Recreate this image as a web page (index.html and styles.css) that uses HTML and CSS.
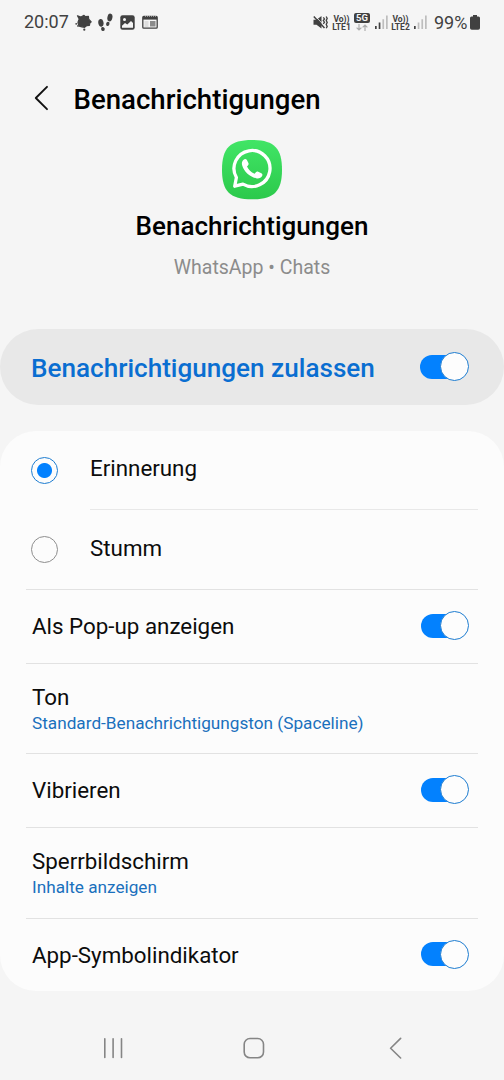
FILE: index.html
```html
<!DOCTYPE html>
<html lang="de">
<head>
<meta charset="utf-8">
<title>Benachrichtigungen</title>
<link rel="stylesheet" href="styles.css">
</head>
<body>
<div class="screen">
  <div class="status">
    <span class="clock">20:07</span>
    <svg class="ic-leaf" width="17" height="17" viewBox="0 0 17 17" fill="#414141"><path d="M2.500 1.800 6 3 9 1.300l1.400 1.400 3-.4.300 2.900 2.500 2.600-1.500 1.500-.2 2-3 .4-1.900 1.600-2.700-.5-2.600-.6-1-2.100L3 8.300 4.200 5z" stroke="#414141" stroke-width="1.200" stroke-linejoin="round"/><circle cx="1.200" cy="9.800" r=".9"/><circle cx="3" cy="11.900" r=".9"/><circle cx="9.300" cy="15.700" r="1.100"/></svg>
    <svg class="ic-steps" width="15" height="19" viewBox="0 0 15 19" fill="#414141"><ellipse cx="2.900" cy="9.800" rx="2.600" ry="3.900" transform="rotate(-10 2.900 9.800)"/><ellipse cx="4.900" cy="16" rx="1.800" ry="2.100" transform="rotate(-15 4.900 16)"/><ellipse cx="11.900" cy="4.500" rx="2.500" ry="3.900" transform="rotate(12 11.900 4.500)"/><ellipse cx="9.800" cy="10.900" rx="1.700" ry="2.100" transform="rotate(15 9.800 10.900)"/></svg>
    <svg class="ic-photo" width="15" height="15" viewBox="0 0 15 15"><rect x=".3" y=".3" width="14.400" height="14.400" rx="2.300" fill="#414141"/><circle cx="4.500" cy="4.500" r="1.500" fill="#f5f5f5"/><path d="M2 10.800 5 8l2.300 1.600L11 6l2 2v4.800H2z" fill="#f5f5f5"/></svg>
    <svg class="ic-news" width="16" height="14" viewBox="0 0 16 14"><rect x=".8" y="1.500" width="14.400" height="11.700" rx="1" fill="none" stroke="#414141" stroke-width="1.300"/><path d="M1 1v3.600h14V1" fill="#414141"/><path d="M3 1.200h11" stroke="#f5f5f5" stroke-width=".7" stroke-dasharray="1 1"/><path d="M2.500 7h4M2.500 9h4M2.500 11h4" stroke="#bbb" stroke-width=".8"/><rect x="8" y="6" width="5.500" height="5.500" fill="#8a8a8a"/></svg>
    <span class="grow"></span>
    <svg class="ic-mute" width="15" height="15" viewBox="0 0 15 15"><path d="M.5 4.800h3L8.500 1v12.500l-5-3.700h-3z" fill="#414141"/><path d="M2 .8 12 11.500" stroke="#f5f5f5" stroke-width=".8"/><path d="M.8 1.400 11.500 13" stroke="#414141" stroke-width="1.500"/><path d="M10.300 2.300l1.200 1.700-1.200 1.600 1.200 1.600-1.200 1.600M13.200 1.500l1 1.900-1 2 1 2-1 2 1 2-1 1.800" fill="none" stroke="#414141" stroke-width="1.300"/></svg>
    <span class="volte v1"><span>Vo))</span><span>LTE1</span></span>
    <span class="net"><span class="g5">5G</span>
      <svg width="12" height="7" viewBox="0 0 12 7" fill="none" stroke="#adadad" stroke-width="1.200"><path d="M3 0v6M.6 3.600 3 6l2.400-2.400M9 7V1M6.600 3.400 9 1l2.400 2.400"/></svg></span>
    <svg class="sig s1" width="13" height="14" viewBox="0 0 13 14"><path d="M0 11h1.700v3H0zM3.700 7.500h1.700V14H3.700z" fill="#414141"/><path d="M7.400 4.300h1.700V14H7.400zM11 .5h1.700V14H11z" fill="#bdbdbd"/></svg>
    <span class="volte v2"><span>Vo))</span><span>LTE2</span></span>
    <svg class="sig s2" width="13" height="14" viewBox="0 0 13 14"><path d="M0 11h1.700v3H0z" fill="#414141"/><path d="M3.700 7.500h1.700V14H3.700zM7.400 4.300h1.700V14H7.400zM11 .5h1.700V14H11z" fill="#bdbdbd"/></svg>
    <span class="pct">99%</span>
    <svg class="ic-bat" width="10" height="15" viewBox="0 0 10 15"><path d="M3 0h4v1.600h1.500A1.500 1.500 0 0 1 10 3.100v9.900a1.800 1.800 0 0 1-1.800 1.800H1.800A1.800 1.800 0 0 1 0 13V3.100a1.500 1.500 0 0 1 1.500-1.500H3z" fill="#414141"/></svg>
  </div>

  <header class="bar">
    <svg class="back" width="15" height="26" viewBox="0 0 15 26"><path d="M13 1.800 1.800 13 13 24.200" fill="none" stroke="#111" stroke-width="1.900" stroke-linecap="round" stroke-linejoin="round"/></svg>
    <h1>Benachrichtigungen</h1>
  </header>

  <section class="app">
    <svg class="logo" width="60" height="60" viewBox="0 0 60 60">
      <defs><linearGradient id="green" x1="0" y1="0" x2="0" y2="1"><stop offset="0" stop-color="#41e566"/><stop offset="1" stop-color="#2cc94b"/></linearGradient></defs>
      <path d="M30 0C52 0 60 8 60 29.700S52 59.300 30 59.300 0 51.400 0 29.700 8 0 30 0z" fill="url(#green)"/>
      <path d="M14.400 37.500A18 18 0 1 1 21 44.100L12.700 46.200z" fill="none" stroke="#fff" stroke-width="3.300" stroke-linejoin="round"/>
      <path d="M21.600 19.700c1-.9 2.600-.8 3.300.3l1.500 3.100c.4.900.2 1.700-.5 2.400l-.9 1c1.500 3.300 4 5.700 7.600 7.200l1.300-1.500c.6-.7 1.400-.9 2.300-.5l3.200 1.500c1 .5 1.300 1.400.8 2.500-1.100 2.200-3.500 3.100-6.100 2.500-6.900-1.700-12-6.500-13.900-12.700-.7-2.300-.3-4.400 1.400-5.800z" fill="#fff"/>
    </svg>
    <h2>Benachrichtigungen</h2>
    <p>WhatsApp • Chats</p>
  </section>

  <div class="master"><span>Benachrichtigungen zulassen</span><i class="switch wide"></i></div>

  <div class="list">
    <div class="row radio first"><i class="dot on"></i><span class="t">Erinnerung</span></div>
    <div class="row radio"><i class="dot"></i><span class="t">Stumm</span></div>
    <div class="row popup"><span class="t">Als Pop-up anzeigen</span><i class="switch"></i></div>
    <div class="row two"><span class="t">Ton</span><span class="s">Standard-Benachrichtigungston (Spaceline)</span></div>
    <div class="row vib"><span class="t">Vibrieren</span><i class="switch"></i></div>
    <div class="row two lock"><span class="t">Sperrbildschirm</span><span class="s">Inhalte anzeigen</span></div>
    <div class="row last"><span class="t">App-Symbolindikator</span><i class="switch"></i></div>
  </div>

  <nav class="nav">
    <svg width="21" height="22" viewBox="0 0 21 22"><path d="M1.800 1.800v18.600M10.100 1.800v18.600M18.500 1.800v18.600" stroke="#858585" stroke-width="1.600" stroke-linecap="round"/></svg>
    <svg class="home" width="22" height="22" viewBox="0 0 22 22"><rect x="1.200" y="1.500" width="19.300" height="19.300" rx="5.800" fill="none" stroke="#858585" stroke-width="1.600"/></svg>
    <svg width="13" height="22" viewBox="0 0 13 22"><path d="M11.600 1.400 1.600 11.200l10 9.800" fill="none" stroke="#858585" stroke-width="1.600" stroke-linecap="round" stroke-linejoin="round"/></svg>
  </nav>
</div>
</body>
</html>
```
FILE: styles.css
```css
*, *::before, *::after { box-sizing: border-box; }
body { margin: 0; background: #f5f5f5; font-family: Roboto, "Liberation Sans", sans-serif; color: #0c0c0c; }
.screen { width: 504px; height: 1080px; display: flex; flex-direction: column; overflow: hidden; }
svg { display: block; flex: none; }
h1, h2, p { margin: 0; }

.status { height: 46px; padding: 0 23px 2px 24px; display: flex; align-items: center; color: #414141; white-space: nowrap; }
.clock { width: 51px; font-size: 18px; line-height: 20px; }
.ic-steps { margin-left: 6px; }
.ic-photo { margin-left: 7px; }
.ic-news { margin-left: 7px; }
.grow { flex: 1; }
.ic-mute { margin-right: -1px; }
.volte { display: flex; flex-direction: column; align-items: center; font-size: 8.500px; font-weight: 700; line-height: 8px; width: 19px; padding-top: 1px; }
.v1 { margin-left: 5px; }
.net { display: flex; flex-direction: column; align-items: center; gap: 1px; margin-left: 3px; }
.g5 { width: 16px; height: 10px; border-radius: 2px; background: #414141; color: #f5f5f5; font-size: 9.500px; font-weight: 700; line-height: 10px; text-align: center; }
.s1 { margin-left: 5px; }
.v2 { margin-left: 3px; }
.s2 { margin-left: 4px; }
.pct { margin-left: 7px; width: 36px; font-size: 18px; }
.ic-bat { margin-right: 1px; }

.bar { height: 94px; padding: 10px 0 0 34px; display: flex; align-items: center; }
.back { margin-right: 24.500px; }
h1 { padding-top: 4px; font-size: 27.600px; font-weight: 500; line-height: 32px; color: #000; }

.app { height: 189px; display: flex; flex-direction: column; align-items: center; }
h2 { margin-top: 11px; font-size: 26px; font-weight: 500; line-height: 30px; color: #000; }
.app p { margin-top: 15px; font-size: 19.500px; line-height: 24px; color: #8c8c8c; }

.master { height: 76px; border-radius: 38px; background: #e8e8e8; padding: 0 35px 0 31px; display: flex; align-items: center; justify-content: space-between; color: #0a6ed1; font-size: 26.100px; font-weight: 500; }
.master span { padding-top: 2px; }

.switch { display: grid; align-items: center; width: 48px; height: 29px; margin-bottom: 1px; }
.switch::before, .switch::after { content: ""; grid-area: 1 / 1; }
.switch::before { width: 42px; height: 24px; border-radius: 12px; background: #0381fe; }
.switch::after { justify-self: end; width: 29px; height: 29px; border-radius: 50%; background: #fdfdfd; border: 1px solid #1d7cd0; }
.wide { width: 49px; }

.list { margin-top: 26px; height: 560px; border-radius: 36px; background: #fcfcfc; padding: 0 26px; display: flex; flex-direction: column; }
.row { display: flex; align-items: center; justify-content: space-between; border-bottom: 1px solid #e2e2e2; padding: 0 9px 1px 6px; }
.t { font-size: 22.350px; line-height: 28px; }
.s { font-size: 17.200px; line-height: 22px; color: #1a70bd; }
.radio { height: 79px; justify-content: flex-start; gap: 32px; padding-left: 5px; }
.radio .t { padding-bottom: 3px; }
.first { height: 80px; border-bottom: 0; padding-bottom: 2px; background: linear-gradient(#e8e8e8, #e8e8e8) 64px 78px / 388px 1px no-repeat; }
.first .t { padding-bottom: 5px; }
.dot { width: 27px; height: 27px; border-radius: 50%; border: 1px solid #8e8e8e; }
.on { border-color: #1d7cd0; background: radial-gradient(circle, #0381fe 7px, transparent 8px); }
.popup { height: 74px; }
.two { height: 90px; flex-direction: column; align-items: flex-start; justify-content: center; gap: 1px; }
.vib { height: 74px; }
.lock { height: 91px; }
.last { height: 72px; border: 0; }

.nav { height: 89px; padding: 46px 102px 0 103px; display: flex; align-items: flex-start; justify-content: space-between; }
.home { margin-right: 5px; }
```
